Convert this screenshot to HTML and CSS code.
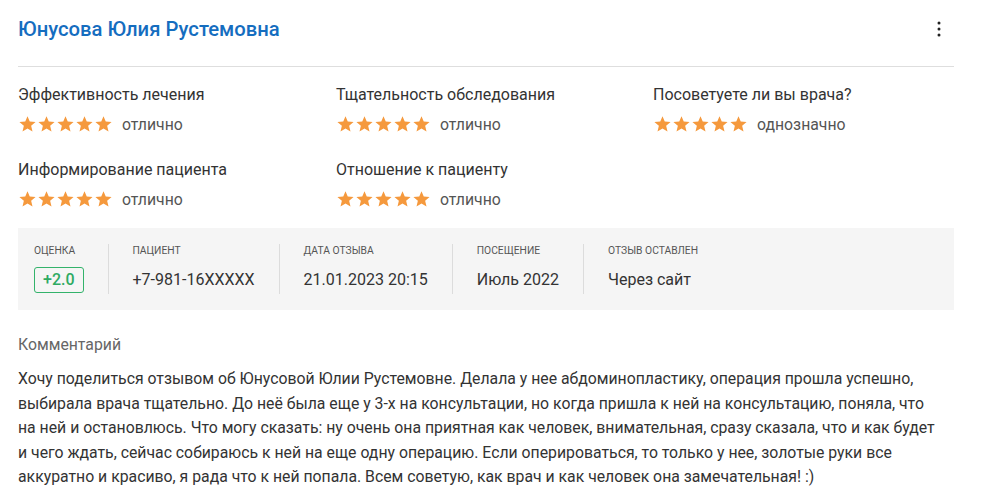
FILE: index.html
```html
<!DOCTYPE html>
<html lang="ru">
<head>
<meta charset="utf-8">
<link rel="stylesheet" href="styles.css">
</head>
<body>
<div class="card">
  <div class="header">
    <a class="doctor">Юнусова Юлия Рустемовна</a>
    <button class="menu" aria-label="Меню">
      <svg width="4" height="16" viewBox="0 0 4 16"><circle cx="2" cy="2" r="1.5"/><circle cx="2" cy="8" r="1.5"/><circle cx="2" cy="14" r="1.5"/></svg>
    </button>
  </div>

  <div class="ratings">
    <div class="rating">
      <div class="rating-label">Эффективность лечения</div>
      <div class="rating-value"><span class="stars"><i></i><i></i><i></i><i></i><i></i></span><span class="rating-text">отлично</span></div>
    </div>
    <div class="rating">
      <div class="rating-label">Тщательность обследования</div>
      <div class="rating-value"><span class="stars"><i></i><i></i><i></i><i></i><i></i></span><span class="rating-text">отлично</span></div>
    </div>
    <div class="rating">
      <div class="rating-label">Посоветуете ли вы врача?</div>
      <div class="rating-value"><span class="stars"><i></i><i></i><i></i><i></i><i></i></span><span class="rating-text">однозначно</span></div>
    </div>
    <div class="rating">
      <div class="rating-label">Информирование пациента</div>
      <div class="rating-value"><span class="stars"><i></i><i></i><i></i><i></i><i></i></span><span class="rating-text">отлично</span></div>
    </div>
    <div class="rating">
      <div class="rating-label">Отношение к пациенту</div>
      <div class="rating-value"><span class="stars"><i></i><i></i><i></i><i></i><i></i></span><span class="rating-text">отлично</span></div>
    </div>
  </div>

  <div class="info">
    <div class="info-item">
      <div class="info-label">Оценка</div>
      <div class="info-value"><span class="badge">+2.0</span></div>
    </div>
    <div class="info-item">
      <div class="info-label">Пациент</div>
      <div class="info-value">+7-981-16XXXXX</div>
    </div>
    <div class="info-item">
      <div class="info-label">Дата отзыва</div>
      <div class="info-value">21.01.2023 20:15</div>
    </div>
    <div class="info-item">
      <div class="info-label">Посещение</div>
      <div class="info-value">Июль 2022</div>
    </div>
    <div class="info-item">
      <div class="info-label">Отзыв оставлен</div>
      <div class="info-value">Через сайт</div>
    </div>
  </div>

  <div class="comment">
    <div class="comment-title">Комментарий</div>
    <p class="comment-text">Хочу поделиться отзывом об Юнусовой Юлии Рустемовне. Делала у нее абдоминопластику, операция прошла успешно, выбирала врача тщательно. До неё была еще у 3-х на консультации, но когда пришла к ней на консультацию, поняла, что на ней и остановлюсь. Что могу сказать: ну очень она приятная как человек, внимательная, сразу сказала, что и как будет и чего ждать, сейчас собираюсь к ней на еще одну операцию. Если оперироваться, то только у нее, золотые руки все аккуратно и красиво, я рада что к ней попала. Всем советую, как врач и как человек она замечательная! :)</p>
  </div>
</div>
</body>
</html>
```

FILE: styles.css
```css
* { box-sizing: border-box; }

body {
  margin: 0;
  background: #fff;
  font-family: Roboto, "Noto Sans", Arial, sans-serif;
  color: #333;
}

.card {
  width: 954px;
  padding: 0 0 0 18px;
}

.header {
  display: flex;
  justify-content: space-between;
  align-items: center;
  padding: 17px 0 25px;
  border-bottom: 1px solid #dedede;
}

.doctor {
  font-size: 20.25px;
  line-height: 24px;
  font-weight: 500;
  color: #156dbf;
  text-decoration: none;
}

.menu {
  border: 0;
  background: none;
  padding: 0;
  margin-right: 13px;
  width: 4px;
  height: 16px;
  display: flex;
  fill: #222;
}

.ratings {
  display: grid;
  grid-template-columns: 318px 317px 1fr;
  row-gap: 27px;
  padding-top: 18px;
}

.rating-label {
  font-size: 16px;
  line-height: 20px;
  color: #333;
}

.rating-value {
  display: flex;
  align-items: center;
  margin-top: 10px;
  height: 18px;
}

.stars {
  display: flex;
  gap: 2px;
  margin-left: 1px;
}

.stars i {
  width: 17px;
  height: 17px;
  background: #f5993d;
  clip-path: polygon(50% 4%, 63.2% 35.8%, 97.6% 38.6%, 71.4% 61%, 79.4% 94.5%, 50% 76.5%, 20.6% 94.5%, 28.6% 61%, 2.4% 38.6%, 36.8% 35.8%);
}

.rating-text {
  margin-left: 10px;
  font-size: 15.8px;
  color: #555;
}

.info {
  display: flex;
  margin-top: 20px;
  background: #f5f5f5;
  padding: 16px 16px;
}

.info-item {
  padding: 0 24px;
  border-left: 1px solid #dcdcdc;
}

.info-item:first-child {
  padding-left: 0;
  border-left: 0;
}

.info-label {
  font-size: 10.3px;
  line-height: 14px;
  text-transform: uppercase;
  color: #555;
}

.info-value {
  margin-top: 8px;
  font-size: 16px;
  line-height: 28px;
  color: #333;
}

.badge {
  display: inline-block;
  padding: 0 8px;
  border: 1px solid #33b36b;
  border-radius: 3px;
  color: #2eaa62;
  font-weight: 500;
  line-height: 24px;
  font-size: 16px;
}

.comment {
  margin-top: 25px;
}

.comment-title {
  font-size: 15.8px;
  line-height: 20px;
  color: #666;
}

.comment-text {
  max-width: 924px;
  margin: 12px 0 0;
  font-size: 15.8px;
  line-height: 24.5px;
  color: #333;
}
```
